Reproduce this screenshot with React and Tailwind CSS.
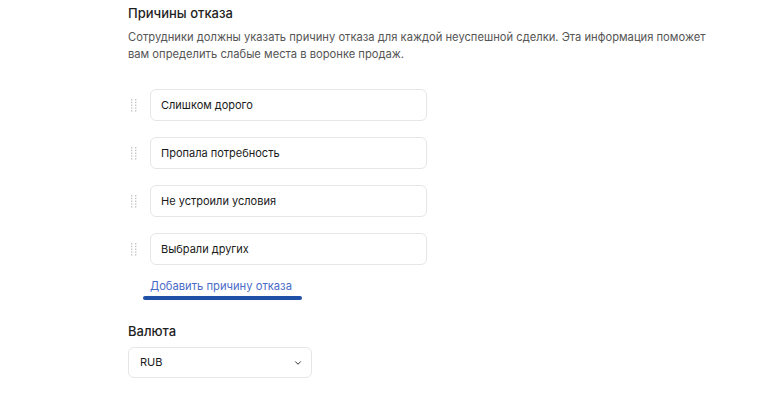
import { ChevronDown } from 'lucide-react';

const reasons = ['Слишком дорого', 'Пропала потребность', 'Не устроили условия', 'Выбрали других'];

function DragHandle() {
  return (
    <svg width="6" height="14" viewBox="0 0 6 14" className="text-[#c4c4c4]">
      {[0, 1, 2, 3, 4].map((r) => (
        <g key={r}>
          <rect x="0" y={1 + r * 2.8} width="1.4" height="1.4" fill="currentColor" />
          <rect x="4" y={1 + r * 2.8} width="1.4" height="1.4" fill="currentColor" />
        </g>
      ))}
    </svg>
  );
}

export default function App() {
  return (
    <div className="min-h-screen bg-white font-['Inter','Noto_Sans',sans-serif] text-[#1f1f1f]">
      <div className="pl-[128px] pt-[2px] w-[740px]">
        <h2 className="text-[13px] font-medium leading-[22px]">Причины отказа</h2>
        <p className="mt-[5px] text-[11.2px] leading-[17px] text-[#555]">
          Сотрудники должны указать причину отказа для каждой неуспешной сделки. Эта информация поможет
          <br />
          вам определить слабые места в воронке продаж.
        </p>

        <div className="mt-[26px] flex flex-col gap-[16px]">
          {reasons.map((r) => (
            <div key={r} className="flex items-center">
              <div className="w-[22px] flex justify-start pl-[3px]">
                <DragHandle />
              </div>
              <div className="w-[277px] h-[32px] flex items-center px-[10px] border border-[#e6e6e6] rounded-[6px] text-[11px] text-[#1a1a1a]">
                {r}
              </div>
            </div>
          ))}
        </div>

        <div className="mt-[14px] ml-[15px] inline-flex flex-col items-start">
          <span className="ml-[7px] text-[11.2px] leading-[14px] text-[#4a6bc9]">Добавить причину отказа</span>
          <span className="mt-[3px] w-[159px] h-[4px] rounded-full bg-[#1f4fa6]" />
        </div>

        <h2 className="mt-[20px] text-[13px] font-medium leading-[22px]">Валюта</h2>
        <div className="mt-[5px] w-[184px] h-[31px] flex items-center justify-between pl-[11px] pr-[8px] border border-[#e6e6e6] rounded-[6px] text-[11px] text-[#1a1a1a]">
          <span>RUB</span>
          <ChevronDown size={10} strokeWidth={2.4} className="text-[#333]" />
        </div>
      </div>
    </div>
  );
}
